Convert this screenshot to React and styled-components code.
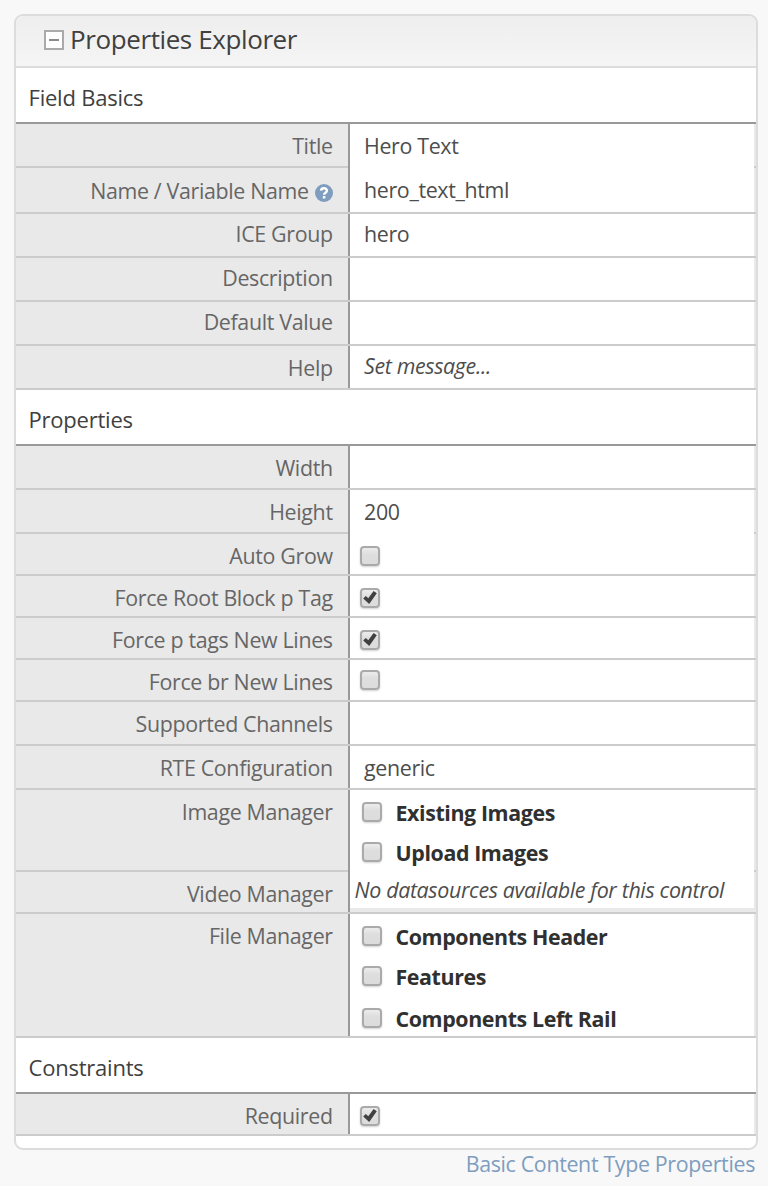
import React from "react";
import styled, { createGlobalStyle, css } from "styled-components";

const GlobalStyle = createGlobalStyle`
  * { box-sizing: border-box; }
  body {
    margin: 0;
    background: #f8f8f8;
    font-family: "Open Sans", "Noto Sans", sans-serif;
    font-size: 21.4px;
    letter-spacing: -0.34px;
    line-height: 32px;
    color: #4d4d4d;
  }
`;

const Page = styled.main`
  display: flex;
  flex-direction: column;
  width: 768px;
  height: 1186px;
  padding: 14px 10px 0 14px;
  overflow: hidden;
`;

const Panel = styled.section`
  height: 1136px;
  flex: none;
  border: 2px solid #dcdcdc;
  border-radius: 9px;
  background: #fff;
  overflow: hidden;
`;

const PanelHeader = styled.header`
  display: flex;
  align-items: flex-start;
  gap: 6px;
  height: 52px;
  padding: 14px 0 0 28px;
  border-bottom: 2px solid #dcdcdc;
  background: linear-gradient(#eeeeee, #f5f5f5);
`;

const PanelTitle = styled.h1`
  margin: -8px 0 0;
  font-size: 26px;
  font-weight: 400;
  letter-spacing: -0.4px;
  line-height: 34px;
  color: #404040;
  white-space: nowrap;
`;

const CollapseButton = styled.button`
  display: grid;
  place-items: center;
  width: 20px;
  height: 20px;
  padding: 0;
  border: 2px solid #aaa;
  background: #fff;

  &::before {
    content: "";
    width: 10px;
    height: 2px;
    background: #8a8a8a;
  }
`;

const SectionTitle = styled.h2`
  height: 56px;
  margin: 0;
  padding: 14px 0 0 12.5px;
  border-bottom: 2px solid #999;
  font-size: 22px;
  font-weight: 400;
  letter-spacing: -0.22px;
  line-height: 30px;
  color: #404040;
`;

const Row = styled.div`
  display: flex;
  height: ${(p) => p.$height}px;
  padding-right: 2px;
  background: #e9e9e9;
  ${(p) =>
    p.$open
      ? css`background: linear-gradient(#ccc, #ccc) bottom / 100% 2px no-repeat #e9e9e9;`
      : css`border-bottom: 2px solid #ccc;`}
`;

const Label = styled.div`
  display: flex;
  justify-content: flex-end;
  gap: 6px;
  width: 332px;
  padding: ${(p) => p.$top}px 15.3px 0 0;
  color: #666;
  white-space: nowrap;
`;

const Value = styled.div`
  flex: 1;
  padding: ${(p) => p.$top}px 0 0 14px;
  border-left: 2px solid #999;
  background: #fff;
  white-space: nowrap;
  ${(p) => p.$note && css`
    font-style: italic;
    padding-left: 4.5px;
    background: linear-gradient(#e9e9e9, #e9e9e9) bottom / 100% 4px no-repeat #fff;
  `}
  ${(p) => p.$boxed && css`padding-left: 10px;`}
  ${(p) => p.$list && css`padding-left: 12px;`}
`;

const Message = styled.em`
  font-style: italic;
`;

const Box = styled.span`
  display: block;
  flex: none;
  width: 20px;
  height: 20px;
  border: 2px solid #aaa;
  border-radius: 4px;
  background: linear-gradient(#ececec, #dedede 40%, #dcdcdc);
  box-shadow: 0 1px 2px rgba(0, 0, 0, 0.18);

  svg {
    display: block;
    width: 16px;
    height: 16px;
  }
`;

const Option = styled.div`
  display: flex;
  align-items: flex-start;
  gap: 13.5px;
  height: ${(p) => p.$height || 40}px;
  color: #303030;
  font-weight: 700;
  letter-spacing: -0.4px;
`;

const OptionText = styled.span`
  margin-top: -5px;
`;

const HelpIcon = styled.svg`
  width: 18px;
  height: 18px;
  margin: 9px 0 0;
`;

const FooterLink = styled.a`
  align-self: flex-end;
  margin: -2px 3px 0 0;
  color: #7e9dbf;
  white-space: nowrap;
`;

function Checkbox({ checked }) {
  return (
    <Box role="checkbox" aria-checked={!!checked}>
      {checked && (
        <svg viewBox="0 0 16 16">
          <path d="M1.2 8.4 L3.8 6 L6.3 8.2 L11.6 1 L14.8 3.2 L7.2 14 Z" fill="#404040" />
        </svg>
      )}
    </Box>
  );
}

function Help() {
  return (
    <HelpIcon viewBox="0 0 18 18">
      <circle cx="9" cy="9" r="9" fill="#7e9dbf" />
      <path d="M6 6.6 C6.4 3.4 12 3.4 11.9 6.8 C11.9 8.8 9.1 8.6 9.1 10.7" fill="none" stroke="#fff" strokeWidth="2.5" />
      <rect x="7.8" y="12" width="2.6" height="2.5" fill="#fff" />
    </HelpIcon>
  );
}

const sections = [
  {
    title: "Field Basics",
    rows: [
      { label: "Title", height: 44, value: "Hero Text", open: true },
      { label: "Name / Variable Name", height: 46, value: "hero_text_html", help: true, labelTop: 7 },
      { label: "ICE Group", height: 44, value: "hero", labelTop: 4, top: 4 },
      { label: "Description", height: 44, labelTop: 4 },
      { label: "Default Value", height: 44, labelTop: 4 },
      { label: "Help", height: 44, message: "Set message...", top: 4 },
    ],
  },
  {
    title: "Properties",
    rows: [
      { label: "Width", height: 44 },
      { label: "Height", height: 44, value: "200", open: true },
      { label: "Auto Grow", height: 42, box: true, top: 12 },
      { label: "Force Root Block p Tag", height: 42, box: true, checked: true, top: 12 },
      { label: "Force p tags New Lines", height: 42, box: true, checked: true, top: 12 },
      { label: "Force br New Lines", height: 42, box: true, top: 10 },
      { label: "Supported Channels", height: 44 },
      { label: "RTE Configuration", height: 44, value: "generic" },
      {
        label: "Image Manager", height: 82, open: true, top: 12,
        options: [{ text: "Existing Images" }, { text: "Upload Images" }],
      },
      { label: "Video Manager", height: 42, value: "No datasources available for this control", note: true, top: 2 },
      {
        label: "File Manager", height: 124, top: 12,
        options: [{ text: "Components Header" }, { text: "Features", height: 42 }, { text: "Components Left Rail", height: 28 }],
      },
    ],
  },
  {
    title: "Constraints",
    rows: [{ label: "Required", height: 42, box: true, checked: true, top: 12 }],
  },
];

function PropertyRow({ row }) {
  return (
    <Row $height={row.height} $open={row.open}>
      <Label $top={row.labelTop ?? 6}>
        {row.label}
        {row.help && <Help />}
      </Label>
      <Value $top={row.top ?? 6} $note={row.note} $boxed={row.box} $list={!!row.options}>
        {row.value}
        {row.message && <Message>{row.message}</Message>}
        {row.box && <Checkbox checked={row.checked} />}
        {row.options?.map((o) => (
          <Option key={o.text} $height={o.height}>
            <Checkbox />
            <OptionText>{o.text}</OptionText>
          </Option>
        ))}
      </Value>
    </Row>
  );
}

export default function App() {
  return (
    <Page>
      <GlobalStyle />
      <Panel>
        <PanelHeader>
          <CollapseButton aria-label="Collapse" />
          <PanelTitle>Properties Explorer</PanelTitle>
        </PanelHeader>
        {sections.map((s) => (
          <React.Fragment key={s.title}>
            <SectionTitle>{s.title}</SectionTitle>
            {s.rows.map((r) => (
              <PropertyRow key={r.label} row={r} />
            ))}
          </React.Fragment>
        ))}
      </Panel>
      <FooterLink>Basic Content Type Properties</FooterLink>
    </Page>
  );
}
